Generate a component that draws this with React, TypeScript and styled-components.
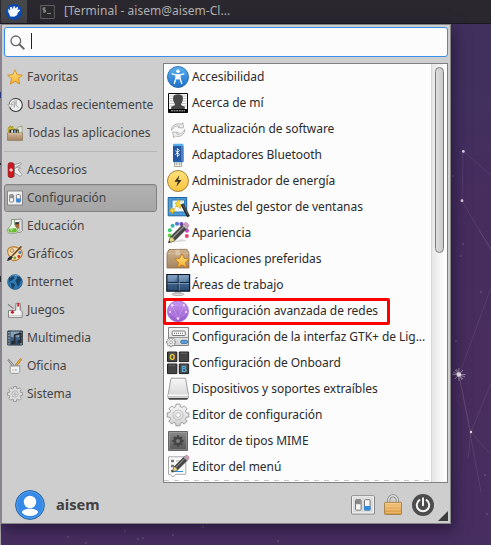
import React from 'react';
import styled, { createGlobalStyle, css } from 'styled-components';

const GlobalStyle = createGlobalStyle`
  * { box-sizing: border-box; }
  html, body { margin: 0; padding: 0; overflow: hidden; }
  body { font-family: 'Noto Sans', 'Open Sans', sans-serif; font-size: 12px; color: #2b2b2b; }
`;

const Desktop = styled.div`
  position: relative;
  width: 491px;
  height: 545px;
  overflow: hidden;
  background: linear-gradient(180deg, #3e305c 0, #41305e 90px, #462d5e 200px, #482d5e 380px, #472e60 545px);
`;

const Wallpaper = styled.svg`
  position: absolute;
  inset: 0;
  display: block;
`;

const TaskPanel = styled.header`
  position: relative;
  display: flex;
  align-items: center;
  height: 24px;
  padding-left: 1px;
  background: #2a272f;
  border-bottom: 1px solid #1b191f;
  color: #b1b0b0;
`;

const MenuButton = styled.div`
  display: flex;
  align-items: center;
  justify-content: center;
  width: 26px;
  height: 23px;
  background: #454749;
`;

const TaskButton = styled.div`
  display: flex;
  align-items: center;
  gap: 9px;
  height: 23px;
  margin-left: 13px;
  letter-spacing: 0.03px;
  white-space: nowrap;
`;

const MenuWindow = styled.main`
  position: relative;
  display: flex;
  flex-direction: column;
  width: 450px;
  height: 500px;
  margin-left: 1px;
  padding: 2px 2px 0;
  border: 1px solid #858585;
  background: #cecece;
  box-shadow: 2px 5px 14px rgba(20, 12, 40, 0.6);
`;

const SearchBox = styled.div`
  display: flex;
  align-items: center;
  flex: none;
  height: 30px;
  padding-left: 5px;
  border: 1px solid #398ee7;
  border-radius: 3px;
  background: #fcfcfc;
`;

const Caret = styled.span`
  width: 1px;
  height: 16px;
  margin: 0 0 2px 6px;
  background: #222;
`;

const Body = styled.div`
  display: flex;
  gap: 6px;
  height: 420px;
  margin-top: 6px;
`;

const Sidebar = styled.nav`
  display: flex;
  flex-direction: column;
  width: 153px;
`;

const Category = styled.div<{ $active?: boolean }>`
  display: flex;
  align-items: center;
  flex: none;
  gap: 4px;
  height: 28px;
  padding: 0 0 0 2px;
  border: 1px solid transparent;
  border-radius: 3px;
  color: #444;
  white-space: nowrap;
  ${(p) =>
    p.$active &&
    css`
      border-color: #838383;
      background: linear-gradient(#b2b2b2, #a6a6a6);
      box-shadow: inset 0 1px 1px #a3a3a3;
    `}
`;

const Label = styled.span`
  line-height: 16px;
  padding-bottom: 1px;
`;

const Divider = styled.hr`
  width: 100%;
  height: 1px;
  margin: 4px 0;
  border: 0;
  background: #b5b5b5;
`;

const AppPane = styled.section`
  display: flex;
  width: 285px;
  height: 420px;
  border: 1px solid #808080;
  background: #fcfcfc;
`;

const AppList = styled.div`
  flex: 1;
  min-width: 0;
  height: 418px;
  background: repeating-linear-gradient(90deg, #c9c9c9 0 5px, #fcfcfc 5px 10px) 0 416px / 100% 1px no-repeat;
`;

const AppRow = styled.div`
  position: relative;
  display: flex;
  align-items: center;
  gap: 2px;
  height: 26px;
  padding-left: 2px;
  letter-spacing: -0.05px;
  white-space: nowrap;
`;

const Highlight = styled.span`
  position: absolute;
  top: 0;
  left: -1px;
  width: 227px;
  height: 27px;
  border: 3px solid #fe0000;
  border-radius: 2px;
`;

const ScrollTrack = styled.div`
  width: 16px;
  flex: none;
  padding: 3px 0 0 3px;
  border-left: 1px solid #d8d8d8;
  background: linear-gradient(90deg, #e6e6e6, #f9f9f9 70%, #fff);
`;

const ScrollThumb = styled.div`
  width: 9px;
  height: 186px;
  border: 1px solid #7d7d7d;
  border-radius: 5px;
  background: linear-gradient(90deg, #dedede, #c9c9c9);
`;

const Footer = styled.footer`
  display: flex;
  align-items: center;
  height: 38px;
  padding: 5px 13px 0 11px;
`;

const UserName = styled.strong`
  flex: 1;
  margin-left: 11px;
  padding-bottom: 2px;
  color: #414141;
  font-size: 14.67px;
  font-weight: 700;
`;

const Actions = styled.div`
  display: flex;
  align-items: center;
  gap: 6px;
`;

const ResizeGrip = styled.span`
  position: absolute;
  right: 2px;
  bottom: 2px;
  width: 10px;
  height: 10px;
  background: #3c3c3c;
  clip-path: polygon(100% 0, 100% 100%, 0 100%);
`;

const Glyph = styled.svg`
  display: block;
  flex: none;
  overflow: visible;
`;

const Small = ({ children }: { children: React.ReactNode }) => (
  <Glyph width="16" height="16" viewBox="0 0 16 16" fill="none">{children}</Glyph>
);
const Large = ({ children }: { children: React.ReactNode }) => (
  <Glyph width="24" height="24" viewBox="0 0 24 24" fill="none">{children}</Glyph>
);

const Gradients = () => (
  <defs>
    <linearGradient id="blue" x2="0" y2="1"><stop stopColor="#5cb2ee" /><stop offset="1" stopColor="#1c6fc9" /></linearGradient>
    <linearGradient id="navy" x2="0" y2="1"><stop stopColor="#7f9cbf" /><stop offset=".5" stopColor="#41648d" /><stop offset="1" stopColor="#26486f" /></linearGradient>
    <linearGradient id="gold" x2="0" y2="1"><stop stopColor="#ffe483" /><stop offset="1" stopColor="#f6ae2d" /></linearGradient>
    <linearGradient id="yellow" x2="0" y2="1"><stop stopColor="#ffe27a" /><stop offset="1" stopColor="#f9c440" /></linearGradient>
    <linearGradient id="box" x2="0" y2="1"><stop stopColor="#cfb291" /><stop offset="1" stopColor="#a58560" /></linearGradient>
    <linearGradient id="silver" x2="0" y2="1"><stop stopColor="#f7f7f7" /><stop offset="1" stopColor="#d2d2d2" /></linearGradient>
    <linearGradient id="dark" x2="0" y2="1"><stop stopColor="#8b8b8b" /><stop offset="1" stopColor="#565656" /></linearGradient>
    <linearGradient id="purple" x2="0" y2="1"><stop stopColor="#c697ee" /><stop offset="1" stopColor="#9558cd" /></linearGradient>
    <linearGradient id="lock" x2="0" y2="1"><stop stopColor="#f3c47e" /><stop offset="1" stopColor="#d9973f" /></linearGradient>
  </defs>
);

/* Cog outline: alternating radii around a centre, eight teeth. */
const cogPath = (c: number, outer: number, inner: number) => {
  const pts: string[] = [];
  for (let i = 0; i < 8; i++) {
    const a = (i * Math.PI) / 4;
    [[-0.27, inner], [-0.19, outer], [0.19, outer], [0.27, inner]].forEach(([d, r]) =>
      pts.push(`${(c + r * Math.sin(a + d)).toFixed(2)} ${(c - r * Math.cos(a + d)).toFixed(2)}`),
    );
  }
  return `M${pts.join('L')}Z`;
};

const Pencil = () => (
  <g>
    <path d="m4.7 15.7-2.1 6 6-1.9L21.2 7.2l-4-4z" fill="#464646" stroke="#242424" strokeWidth=".6" />
    <path d="M6.5 16.8 18.2 5.1" stroke="#a0a0a0" strokeWidth="1.2" />
    <path d="m4.7 15.7-2.1 6 6-1.9-.9-2.3z" fill="#e8d88a" stroke="#766a3c" strokeWidth=".5" />
    <path d="m2.4 22 .8-2.3 1.4 1.4z" fill="#222" />
    <path d="m16.4 4.2 3.8 3.8 1.3-1.3-3.8-3.8z" fill="#c9c9c9" stroke="#777" strokeWidth=".4" />
    <path d="m17.8 2.9 1-1c1.3-1.3 5 2.2 3.7 3.7l-1 1z" fill="#dba0c9" stroke="#9d608b" strokeWidth=".6" />
  </g>
);

const smallIcons = {
  star: <path d="m8 .8 2.1 4.9 5.3.5-4 3.5 1.3 5.4L8 12.3l-4.7 2.8 1.3-5.4-4-3.5 5.3-.5z" fill="url(#gold)" stroke="#d58d20" strokeWidth=".9" strokeLinejoin="round" />,
  history: <g>
    <circle cx="8.8" cy="8" r="6.5" fill="#f1f1f1" stroke="#383838" strokeWidth="1.1" />
    <path d="M9 3.2v5l2.5 2.5M7.2 4.5v6.3" stroke="#797979" strokeWidth=".8" />
    <path d="M3.4 8c0-3 1.6-4.6 3.8-4.9" stroke="#8c8c8c" strokeWidth="2.4" />
    <path d="M3.4 8c0-3 1.6-4.6 3.8-4.9" stroke="#fff" strokeWidth="1.2" />
    <path d="M.7 7.3h5L3.2 11z" fill="#fafafa" stroke="#8c8c8c" strokeWidth=".7" />
  </g>,
  toolbox: <g>
    <path d="M1.2 8V2.5h1.5V1h1.4v2L6 1v6h1V4h4V2.5L14.6 1v7" fill="#d9c22c" stroke="#8c852b" strokeWidth=".6" />
    <path d="M9.5 5.5 11 2l4-.7V8h-4z" fill="#dce4d8" stroke="#819574" strokeWidth=".6" />
    <path d="M2.5 4.6h9.5V8H2.5z" fill="#222" /><path d="M4.2 5.2h1.9V8H4.2z" fill="#f3f3f3" /><path d="M7 5.2h1.9V8H7z" fill="#7aa6dc" /><path d="M9.8 5.4h1.6V8H9.8z" fill="#a5bd3d" />
    <path d="M.5 8h15v7.4H.5z" fill="url(#box)" stroke="#8d7454" strokeWidth=".7" /><path d="M1 8.8h14" stroke="#d9c5a8" />
  </g>,
  knife: <g>
    <path d="M7 2.8 13.6.8l1 1.2-5.4 3M7.5 8.5c0-3.5 3.6-4 6-2.4L11 7.4l3.8 5.2-1.6 1.8L8 11" fill="#eee" stroke="#8c8c8c" strokeWidth=".8" />
    <rect x="1.2" y=".7" width="5.6" height="14.7" rx="2" fill="#d11820" stroke="#900b11" strokeWidth=".8" />
    <path d="M4.1 6.2v3.6M2.3 8h3.6" stroke="#fff" /><path d="M7.5 1.5v13.4" stroke="#777" strokeWidth=".7" />
  </g>,
  switches: <g>
    <path d="M.5 1v14h15V1z" fill="#f1f1f1" stroke="#858585" />
    <rect x="2.6" y="4.6" width="4" height="7.4" rx=".8" fill="#f9f9f9" stroke="#777" strokeWidth=".9" /><path d="M3.1 5.1h3v3.2h-3z" fill="#8d8d8d" />
    <rect x="9.4" y="4.6" width="4" height="7.4" rx=".8" fill="#f9f9f9" stroke="#777" strokeWidth=".9" /><path d="M9.3 8.4h4.2v3.8H9.3z" fill="#3689e6" />
  </g>,
  flask: <g>
    <path d="m5 1.7 9.3-.7 1 1.5v10.3l-2 1.5-8-.3z" fill="#eee" stroke="#777" strokeWidth=".8" />
    <path d="M8 4.5h4.5v6H8z" fill="#a96636" /><path d="M8.5 4.2h3.5v2H8.5z" fill="#333" /><path d="m12.3 3.5 2.2-1v9L12.3 13z" fill="#e4e4e4" stroke="#999" strokeWidth=".5" />
    <path d="M4.4 1.5h3.1v5l3 4.6c1.2 2.2 0 4-2.2 4H3c-2.3 0-3.5-1.8-2.2-4l3.6-5z" fill="#edf7e8" stroke="#718a6b" strokeWidth=".8" />
    <path d="M2 10.4c2 1.3 5-1 7.3.3 1.2 2 .7 3.5-1.3 3.5H3.3c-2 0-2.7-1.4-1.3-3.8z" fill="#69b82d" /><circle cx="4.5" cy="12" r="1.2" fill="#a7dd7b" />
  </g>,
  palette: <g>
    <path d="M3.5 1.2c5-1.3 11.9 1.5 11.8 6.1 0 4.5-5.4 8-9.7 7.2-2.7-.5-1.1-3-2.5-4-2.5-1.7-4.1-7.7.4-9.3z" fill="#f0dcb8" stroke="#c07c25" strokeWidth="1.1" />
    <circle cx="5" cy="4.5" r="1.8" fill="#dcd4c8" stroke="#c07c25" strokeWidth=".9" />
    <circle cx="12.9" cy="6.5" r="1.4" fill="#477bb7" /><circle cx="11.8" cy="10.5" r="1.4" fill="#cf342b" /><circle cx="7.8" cy="12" r="1.4" fill="#7ba632" />
    <path d="m5 10 9.4-9.6" stroke="#704822" strokeWidth="1.6" /><path d="m4.4 9.8 1.5 1.5L3.3 14 0 15l1-3z" fill="#262626" />
  </g>,
  globe: <g>
    <circle cx="8" cy="8" r="7.4" fill="url(#navy)" stroke="#245985" strokeWidth=".7" /><circle cx="8" cy="8" r="7" fill="#2c80bd" opacity=".8" />
    <path d="m1.8 4.2 2.8-2.6 3.2-.4L6.6 3l1.1 1-2.2 2.2-1.7.5-1.3 2zM3.6 8.8l3.7 1 .8 1.4-2.1 3-1.2-.4zM10 2.2l2.8.5 2 3.5-1.4 1-.8 3.6-1.8 2-1.2-3.2-1.3-2.8L10 4.4z" fill="#184468" />
    <path d="M3 3.5a6.5 6.5 0 0 1 9-1.2" stroke="#7db3d5" opacity=".6" />
  </g>,
  games: <g>
    <path d="M1.5 8.5h7l.4-7.2h4.4l.4 7.2 1.5 1v5.9H1.5z" fill="#f4f4f4" stroke="#7b7b7b" strokeWidth=".9" />
    <path d="M9.8 8.3V2M12.5 8.3V2M2 13.5h13" stroke="#bbb" strokeWidth=".7" /><path d="M11.2 1v3.6" stroke="#d22028" strokeWidth="1.8" />
    <path d="M5.4 8.6v3.2M3.8 10.2H7" stroke="#c7101b" strokeWidth="1.4" /><path d="M1 2.3 6.5 6.6" stroke="#808080" strokeWidth="1.2" />
  </g>,
  media: <g>
    <path d="M.8 1h14.5v14H.8z" fill="#49616f" stroke="#27343b" /><path d="M3.5 1.5h9v13h-9z" fill="url(#navy)" /><path d="M4 2h8v5H4z" fill="#93adb9" opacity=".7" />
    <path d="M2 2v13M14 2v13" stroke="#c5d2d8" strokeWidth="1.1" strokeDasharray="1.2 1.6" />
    <path d="M7.7 12V5l6-1.6v8" stroke="#262b2f" strokeWidth="1.6" /><ellipse cx="6.3" cy="12.5" rx="2.2" ry="1.8" fill="#262b2f" /><ellipse cx="12.4" cy="11.8" rx="2.2" ry="1.8" fill="#262b2f" />
  </g>,
  office: <g>
    <path d="m1 1.5 6 6.8" stroke="#707070" strokeWidth="2" /><path d="m1 1.5 6 6.8" stroke="#eee" strokeWidth=".7" />
    <path d="m14.3.8-6 7.5" stroke="#b47a22" strokeWidth="2.2" /><path d="m14.3.8-6 7.5" stroke="#edb950" strokeWidth="1" />
    <path d="M3.2 7.5h9.5v6.4l-1.2 1.4H4.4l-1.2-1.4z" fill="#f2f2f2" stroke="#888" strokeWidth=".8" /><path d="M4 8.2h8" stroke="#ababab" /><path d="M7.8 11h2v2h-2z" fill="#a9c8e7" /><path d="M5 11h2v2H5z" fill="#eed1bc" />
  </g>,
  cog: <g><path d={cogPath(8, 7.6, 5.8)} fill="#dedede" stroke="#8c8c8c" strokeWidth=".8" /><circle cx="8" cy="8" r="3.2" stroke="#aaa" strokeWidth=".8" /><circle cx="8" cy="8" r="1.3" fill="#d0d0d0" stroke="#999" strokeWidth=".5" /></g>,
};

const largeIcons = {
  access: <g>
    <circle cx="12" cy="12" r="10.5" fill="url(#blue)" stroke="#2869aa" strokeWidth=".9" />
    <circle cx="12" cy="6.2" r="1.8" fill="#fff" /><path d="m6.2 8.8 3.8 1.1v3.4L8.3 18.5m9.5-9.7L14 9.9v3.4l1.7 5.2" stroke="#fff" strokeWidth="1.3" strokeLinecap="round" /><path d="M10 9.3h4V14l-2 .6-2-.6z" fill="#fff" />
  </g>,
  profile: <g>
    <path d="M2.5 2.5h19v19h-19z" fill="#fafafa" stroke="#090909" /><path d="M3.5 5h17M3.5 7.5h17M3.5 10h17M3.5 12.5h17M3.5 15h17" stroke="#b9b9b9" strokeWidth=".8" />
    <path d="M7.3 5.6c1.2-3.2 8.2-3.2 9.4 0 .6 2.6.1 5-1.5 7v1.7l3.6 1.5V18H5.2v-2.2l3.6-1.5v-1.7c-1.6-2-2.1-4.4-1.5-7z" fill="#464646" /><path d="M2.5 18h19v3.5h-19z" fill="#090909" /><path d="M5 19.8h14" stroke="#bbb" strokeDasharray="2 .6" />
  </g>,
  refresh: <g stroke="#969696" strokeWidth=".7" fill="#f2f2f2">
    <path d="M5.5 13.5C5 9 10 5.5 15 7.3l2-1.5.3 5.2-5.2-.3 1.6-1.5c-3.5-.9-6.3.8-8.2 4.3z" /><path d="M18.7 12.5c.5 4.5-4.5 8.2-9.2 6.5l-1.8 1.7-1-5.7 5.5.4-1.5 1.5c3.2.7 6.4-1 8-4.4z" />
  </g>,
  usb: <g>
    <path d="M8.5 18.5h7v5h-7z" fill="#ececdf" stroke="#8b8b7e" strokeWidth=".7" /><path d="M9.8 21h1.5m1.5 0h1.5" stroke="#77776c" />
    <rect x="7" y=".8" width="10.4" height="18.4" rx="1" fill="url(#blue)" /><path d="M7 3h10.4v15.5H7z" fill="#2458a3" /><path d="M16 3v15" stroke="#5c90ce" strokeWidth="1.5" />
    <path d="m9.3 7.6 4.2 4.1-2.1 2V5.6l2.1 2-4.2 4.1" stroke="#fff" strokeWidth=".9" />
  </g>,
  power: <g><circle cx="12" cy="12" r="10.5" fill="url(#yellow)" stroke="#9c7833" strokeWidth=".9" /><path d="m13.4 6.3-5 6.5h3.4l-1.4 5 5.2-6.8h-3.4z" fill="#383027" /></g>,
  wand: <g>
    <path d="M2.2 2.5h18.5v18.3H2.2z" fill="#4a9ad6" stroke="#1961a0" /><path d="M6 5h12.5v12H6z" fill="#eef6fa" stroke="#287bb9" />
    <path d="m5 12.5 1.5 1.7 2-1.1-.5 2.2 1.7 1.2-2.4.1-.8 2-1.2-2-2.1.2 1.4-1.7zM11 7.5l1.2-3 1.4 2.2 2.7-.7-.8 2.5L18 10l-3 .8-.8 2.8-2-2.2-2.9.5 1.3-2.1L9 8.1z" fill="#f5d939" stroke="#d9a819" strokeWidth=".7" />
    <path d="m15.5 8 7.1 13.6" stroke="#222" strokeWidth="3" /><path d="m14.6 6.3 1.4 2.7" stroke="#eee" strokeWidth="3" /><path d="m16.5 9 5.7 11.2" stroke="#777" strokeWidth=".8" />
  </g>,
  appearance: <g>
    <circle cx="3.7" cy="14.5" r="2" fill="#61d348" /><circle cx="3.8" cy="9.2" r="2" fill="#35cf72" /><circle cx="6.6" cy="4.7" r="2" fill="#36b6b0" /><circle cx="11" cy="2.8" r="2" fill="#5277cf" /><circle cx="15.4" cy="3" r="2" fill="#6945b9" /><circle cx="21" cy="9.8" r="2" fill="#cf46c4" /><circle cx="20.8" cy="15" r="2" fill="#ed456c" />
    <path d="M6 21.5 16 18l5 2z" fill="#c9c9c9" opacity=".7" /><Pencil />
  </g>,
  package: <g>
    <path d="m3 2.5 18-.2 2 4V21H1V6.3z" fill="url(#box)" stroke="#8c6b4c" strokeWidth=".8" /><path d="M1.5 6.5h21" stroke="#d2b79a" /><path d="M9.6 2.8h4v6l-2-1-2 1z" fill="#e3d0b8" opacity=".7" />
    <path d="m16 6.6 2.2 4.8 5 .5-3.8 3.6 1.2 5.1-4.6-2.7-4.7 2.7 1.2-5.1-3.8-3.6 5-.5z" fill="url(#gold)" stroke="#c4781f" strokeWidth=".9" />
  </g>,
  desktop: <g>
    <path d="M10 18h4l.8 3H9z" fill="#ccc" stroke="#8d8d8d" strokeWidth=".5" /><ellipse cx="12" cy="21.3" rx="6" ry="1.3" fill="#ddd" stroke="#888" strokeWidth=".6" />
    <path d="M.8 1.5h22.8v16.7H.8z" fill="url(#navy)" stroke="#0c1824" strokeWidth="1.2" /><path d="M12.2 2v15.7M1.5 9.5H23" stroke="#122d49" strokeWidth="1.2" /><path d="M13.2 2.5v15.2M1.5 10.5H23" stroke="#b3c4d4" strokeWidth=".5" /><path d="M1.7 2.5h9.7l-3 6.3H1.7zM14 2.5h8.6L20 8.8h-6z" fill="#9ab4cf" opacity=".35" />
  </g>,
  network: <g><circle cx="12" cy="12.3" r="10.6" fill="url(#purple)" stroke="#9562c4" strokeWidth=".6" /><path d="M6.2 6.3 17.8 6 21 13l-9 7-8-7zM6.2 6.3 12 20l5.8-14" stroke="#ddb9fa" strokeWidth=".6" opacity=".6" /><g fill="#eed8ff"><circle cx="6.2" cy="6.3" r="1.3" /><circle cx="17.8" cy="6.2" r="1.1" /><circle cx="12" cy="19.6" r="1.3" /><circle cx="4" cy="13" r="1.1" /><circle cx="20" cy="13" r="1.1" /></g></g>,
  greeter: <g>
    <path d="M2.5 2.5h20v18h-20z" fill="url(#silver)" stroke="#858585" /><path d="M3 12.5h19" stroke="#999" /><rect x="6.2" y="6" width="13" height="4.5" rx=".8" fill="#fff" stroke="#777" /><path d="M8 8.3h9.5" stroke="#555" strokeWidth="1.1" strokeDasharray="1 1" />
    <rect x="14.7" y="15.3" width="7" height="3.2" rx="1.4" fill="#559bd9" stroke="#336995" strokeWidth=".7" /><g transform="translate(.4 12.6) scale(.58)"><path d={cogPath(8, 8, 6)} fill="#eee" stroke="#737373" strokeWidth="1.2" /><circle cx="8" cy="8" r="2.5" fill="#fff" stroke="#777" /></g>
  </g>,
  keyboard: <g fontFamily="Liberation Mono" fontWeight="700" fontSize="9.5" textAnchor="middle">
    <g fill="#444" stroke="#202020"><path d="M1.5 1h9.3v9.6H1.5zM13.3 1h9.3v9.6h-9.3zM1.5 13h9.3v9.6H1.5zM13.3 13h9.3v9.6h-9.3z" /></g>
    <path d="M3 2.2h6.3M14.8 2.2h6.3M3 14.2h6.3M14.8 14.2h6.3" stroke="#777" strokeWidth=".7" /><text x="6.2" y="9" fill="#efd439">O</text><text x="18" y="21" fill="#54afe0">B</text>
  </g>,
  drive: <g><path d="M5 1.2h14.5l3 17v2.3L21 22.5H3.5L2 20.5v-2.3z" fill="url(#silver)" stroke="#959595" strokeWidth=".9" /><path d="M2 18.2h20.5" stroke="#fff" strokeWidth="1.2" /><path d="m2 21 1.4 1.6H21l1.4-1.6z" fill="#444" /><path d="M3 19.6h18.5" stroke="#bcbcbc" strokeWidth=".6" /></g>,
  cog: <g><path d={cogPath(12, 11, 8.6)} fill="url(#silver)" stroke="#939393" strokeWidth=".9" strokeLinejoin="round" /><circle cx="12" cy="12" r="5" stroke="#b5b5b5" strokeWidth=".8" /><circle cx="12" cy="12" r="2.3" fill="#fff" stroke="#b2b2b2" strokeWidth=".8" /></g>,
  mime: <g><path d="M2.5 2.5h19v19h-19z" fill="url(#dark)" stroke="#666" /><path d="M3.5 3.5h17v17h-17z" stroke="#aaa" strokeWidth=".5" /><g transform="translate(5.2 5.2) scale(.85)"><path d={cogPath(8, 6.8, 5)} fill="#444" /><circle cx="8" cy="8" r="2.3" fill="#7d7d7d" /></g></g>,
  menu: <g><path d="M2.5 1.8h17.3v17.5H10L7 22l-2.7-2.7H2.5z" fill="#fafafa" stroke="#aaa" /><g stroke="#777" strokeWidth="2.4"><path d="M5 6h3M5 11h3M5 16h3" /></g><path d="M10 6h6M10 11h5" stroke="#aaa" /><path d="M5 16.5h12" stroke="#2196dc" /><g transform="translate(4.2 -1.2) scale(.83)"><Pencil /></g></g>,
};

type SmallName = keyof typeof smallIcons;
type LargeName = keyof typeof largeIcons;

const shortcuts: [SmallName, string][] = [
  ['star', 'Favoritas'], ['history', 'Usadas recientemente'], ['toolbox', 'Todas las aplicaciones'],
];
const categories: [SmallName, string][] = [
  ['knife', 'Accesorios'], ['switches', 'Configuración'], ['flask', 'Educación'], ['palette', 'Gráficos'],
  ['globe', 'Internet'], ['games', 'Juegos'], ['media', 'Multimedia'], ['office', 'Oficina'], ['cog', 'Sistema'],
];
const apps: [LargeName, string][] = [
  ['access', 'Accesibilidad'], ['profile', 'Acerca de mí'], ['refresh', 'Actualización de software'],
  ['usb', 'Adaptadores Bluetooth'], ['power', 'Administrador de energía'], ['wand', 'Ajustes del gestor de ventanas'],
  ['appearance', 'Apariencia'], ['package', 'Aplicaciones preferidas'], ['desktop', 'Áreas de trabajo'],
  ['network', 'Configuración avanzada de redes'], ['greeter', 'Configuración de la interfaz GTK+ de Lig...'],
  ['keyboard', 'Configuración de Onboard'], ['drive', 'Dispositivos y soportes extraíbles'],
  ['cog', 'Editor de configuración'], ['mime', 'Editor de tipos MIME'], ['menu', 'Editor del menú'],
];

const stars = [[453, 176], [463, 244], [461, 256], [481, 292], [456, 341], [485, 475], [487, 514], [203, 527], [125, 531], [68, 537], [138, 539], [143, 538], [173, 535], [86, 543], [278, 541]];

const App = () => (
  <Desktop>
    <GlobalStyle />
    <Wallpaper width="491" height="545" viewBox="0 0 491 545" fill="none">
      <Gradients />
      <path d="M0 24h1v521H0z" fill="#aaa5aa" />
      <path d="M0 92h1v6H0z" fill="#334b9b" /><path d="M0 163h1v2H0zM0 276h1v6H0z" fill="#333" />
      <path d="m491 175-28-24-1 50 29 49M479 230l12 19M491 288l-32 87 5 25 17 92M459 375l5 25 7 32-3 26M491 383l-20 49 20 23" stroke="#aa94ba" strokeOpacity=".2" strokeWidth=".8" />
      <g fill="#9d87aa" opacity=".6">{stars.map(([x, y]) => <circle key={`${x}-${y}`} cx={x} cy={y} r=".8" />)}</g>
      <g fill="#ded5e4"><circle cx="463.3" cy="151.4" r="1.4" /><circle cx="462" cy="200.7" r="1.4" /><circle cx="471" cy="432" r="1.2" /></g>
      <path d="m458.8 368 .2 13M452.5 374.5h13M455 370l8 9M463 370l-8 9M456 369l6 11M453 372l12 5" stroke="#d8cfdd" strokeOpacity=".7" strokeWidth=".8" /><circle cx="458.8" cy="374.5" r="2.3" fill="#f5f2f5" />
    </Wallpaper>
    <TaskPanel>
      <MenuButton>
        <Glyph width="16" height="16" viewBox="0 0 16 16">
          <circle cx="8" cy="8" r="8" fill="#0b4bb3" />
          <path d="m2 4.5 2.2 1.8L4 3.2l1.6-.4 1 2.4 1-2.9 1.5.3.1 2 2-1.8 1 .9-.8 2 2.2-.3.5 1.2-2.3 2.1-.6 2.3-3 1.7-4-.3L3 9.3 1.6 6.8l1 .2z" fill="#f5f8fc" />
        </Glyph>
      </MenuButton>
      <TaskButton>
        <Glyph width="15" height="16" viewBox="0 0 15 16" fill="none"><path d="M.7 1.5h13.6v13H.7z" fill="#29292c" stroke="#606064" /><path d="M5.5 4H3v2h2.5v2H3M4.2 3.2v5.6M7 9.5h4" stroke="#a0a0a0" strokeWidth=".8" /></Glyph>
        <Label>[Terminal - aisem@aisem-Cl...</Label>
      </TaskButton>
    </TaskPanel>
    <MenuWindow>
      <SearchBox>
        <Glyph width="15" height="15" viewBox="0 0 15 15" fill="none"><circle cx="5.8" cy="5.8" r="4.8" stroke="#666" strokeWidth="1.3" /><path d="m9.5 9.5 4.3 4.2" stroke="#666" strokeWidth="1.9" strokeLinecap="round" /></Glyph>
        <Caret />
      </SearchBox>
      <Body>
        <Sidebar>
          {shortcuts.map(([icon, label]) => <Category key={label}><Small>{smallIcons[icon]}</Small><Label>{label}</Label></Category>)}
          <Divider />
          {categories.map(([icon, label]) => <Category key={label} $active={icon === 'switches'}><Small>{smallIcons[icon]}</Small><Label>{label}</Label></Category>)}
        </Sidebar>
        <AppPane>
          <AppList>
            {apps.map(([icon, label]) => <AppRow key={label}><Large>{largeIcons[icon]}</Large><Label>{label}</Label>{icon === 'network' && <Highlight />}</AppRow>)}
          </AppList>
          <ScrollTrack><ScrollThumb /></ScrollTrack>
        </AppPane>
      </Body>
      <Footer>
        <Glyph width="30" height="30" viewBox="0 0 30 30"><circle cx="15" cy="15" r="14.4" fill="#3689e6" stroke="#2b6298" /><circle cx="15" cy="15" r="13.3" fill="none" stroke="#4da0ed" /><circle cx="15" cy="12" r="6.2" fill="#fff" /><path d="M7 22.5c0-5 16-5 16 0-1 1.7-4 3.5-8 3.5s-7-1.8-8-3.5z" fill="#fff" /></Glyph>
        <UserName>aisem</UserName>
        <Actions>
          <Glyph width="24" height="20" viewBox="0 0 24 20" fill="none"><rect x=".5" y=".8" width="23" height="18.2" rx="1" fill="#dcdcdc" stroke="#858585" /><path d="M1.5 1.8h21v16h-21z" stroke="#f4f4f4" /><g fill="#f5f5f5" stroke="#777"><rect x="4.5" y="4.7" width="5.6" height="10.5" rx="1" /><rect x="13.5" y="4.7" width="5.6" height="10.5" rx="1" /></g><path d="M4.8 5h5v4.2h-5z" fill="#888" /><path d="M13.2 11h6.2v4.4h-6.2z" fill="#318de0" /></Glyph>
          <Glyph width="24" height="24" viewBox="0 0 24 24" fill="none"><path d="M7.7 13V7.5c0-6.3 8.6-6.3 8.6 0V13" stroke="#808080" strokeWidth="3" /><path d="M7.7 13V7.5c0-6.3 8.6-6.3 8.6 0V13" stroke="#dedede" strokeWidth="1.5" /><rect x="3.5" y="9.3" width="17" height="12.2" rx=".8" fill="url(#lock)" stroke="#9b793f" strokeWidth=".8" /><path d="M4.5 10.5h15M4.5 13.5h15M4.5 16.5h15M4.5 19.5h15" stroke="#f8d092" opacity=".5" /></Glyph>
          <Glyph width="24" height="24" viewBox="0 0 24 24" fill="none"><circle cx="12" cy="12" r="11" fill="#4c4c4c" /><path d="M8.4 7.1a6.2 6.2 0 1 0 7.2 0M12 5.2v7" stroke="#f4f4f4" strokeWidth="2" strokeLinecap="round" /></Glyph>
        </Actions>
      </Footer>
      <ResizeGrip />
    </MenuWindow>
  </Desktop>
);

export default App;
